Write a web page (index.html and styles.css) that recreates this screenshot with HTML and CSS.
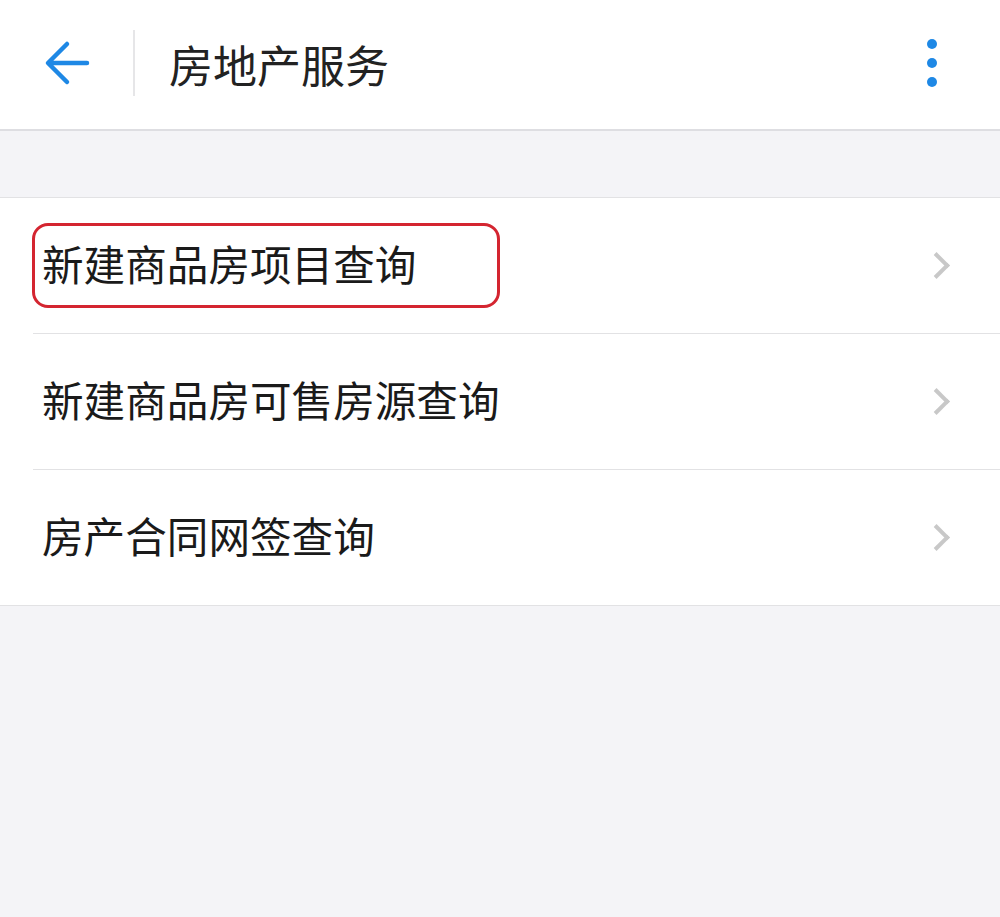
FILE: index.html
```html
<!DOCTYPE html>
<html lang="zh">
<head>
    <meta charset="UTF-8"/>
    <title>房地产服务</title>
    <link rel="stylesheet" href="styles.css">
</head>
<body>
<div class="top-bar">
    <a href="javascript:void(0);" class="back-btn">
        <svg width="48" height="48" viewBox="0 0 48 48">
            <path d="M44 24H6M24 5L5 24l19 19" fill="none" stroke="#1e88e5" stroke-width="4.5" stroke-linecap="round" stroke-linejoin="round"/>
        </svg>
    </a>
    <span class="top-divider"></span>
    <h1 class="top-title">房地产服务</h1>
    <a href="javascript:void(0);" class="more-btn">
        <i></i><i></i><i></i>
    </a>
</div>

<div class="gap-band"></div>

<ul class="service-list">
    <li class="service-item">
        <span class="service-name">新建商品房项目查询</span>
        <span class="mark"></span>
        <span class="arrow"></span>
    </li>
    <li class="service-item">
        <span class="service-name">新建商品房可售房源查询</span>
        <span class="arrow"></span>
    </li>
    <li class="service-item">
        <span class="service-name">房产合同网签查询</span>
        <span class="arrow"></span>
    </li>
</ul>
</body>
</html>
```

FILE: styles.css
```css
* {
    margin: 0;
    padding: 0;
}

body {
    background-color: #f4f4f7;
    font-family: "Noto Sans CJK SC", "Noto Sans", sans-serif;
    color: #1a1a1a;
}

a {
    text-decoration: none;
}

ul {
    list-style: none;
}

.top-bar {
    height: 129px;
    background-color: #fff;
    border-bottom: 2px solid #dedee2;
    display: flex;
    align-items: center;
}

.back-btn {
    width: 48px;
    height: 48px;
    margin-left: 43px;
    margin-top: -3px;
    display: flex;
}

.top-divider {
    width: 2px;
    height: 66px;
    background-color: #e6e6e8;
    margin-left: 42px;
    margin-top: -3px;
}

.top-title {
    font-size: 44px;
    line-height: 1;
    font-weight: normal;
    color: #222;
    margin-left: 34px;
    margin-top: -2px;
    flex: 1;
}

.more-btn {
    width: 12px;
    margin-right: 61px;
    margin-top: -3px;
    display: flex;
    flex-direction: column;
    gap: 9px;
}

.more-btn i {
    width: 10px;
    height: 10px;
    border-radius: 50%;
    background-color: #1e88e5;
}

.gap-band {
    height: 66px;
}

.service-list {
    background-color: #fff;
    border-top: 1px solid #e2e2e4;
    border-bottom: 1px solid #e2e2e4;
}

.service-item {
    position: relative;
    height: 135px;
    display: flex;
    align-items: center;
    margin-left: 33px;
    padding-left: 9px;
    border-bottom: 1px solid #e2e2e4;
}

.service-item:last-child {
    border-bottom: none;
}

.service-name {
    flex: 1;
    font-size: 41.6px;
    line-height: 1;
    margin-top: -3px;
}

.arrow {
    width: 15px;
    height: 15px;
    border-top: 4px solid #c8c8c8;
    border-right: 4px solid #c8c8c8;
    transform: rotate(45deg);
    margin-right: 54px;
}

/* 红框标注 */
.mark {
    position: absolute;
    left: -1px;
    top: 25px;
    width: 462px;
    height: 79px;
    border: 3px solid #d42530;
    border-radius: 16px;
}
```
